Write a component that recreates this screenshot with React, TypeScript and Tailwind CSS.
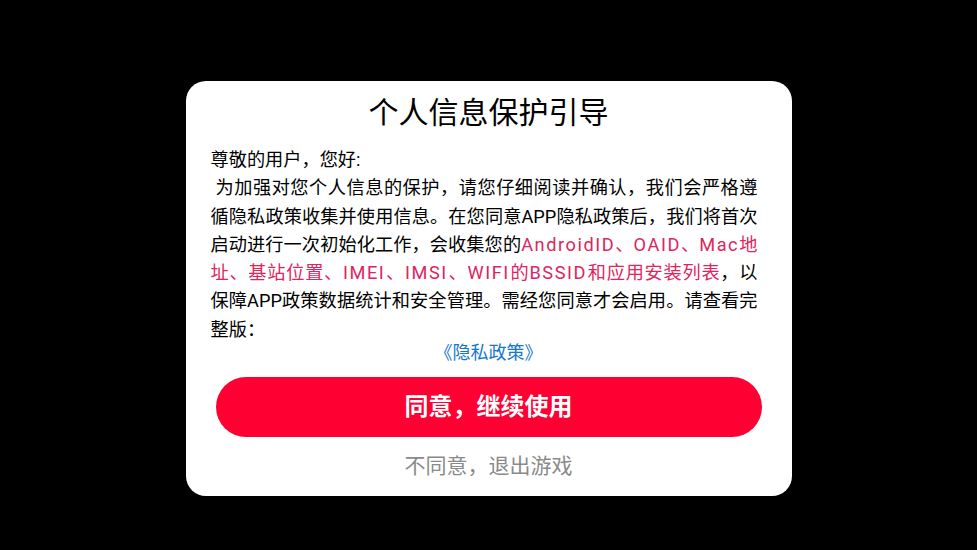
import { Fragment } from "react";

// Latin runs in the red list sit wider than plain Roboto in the reference
const red = "text-[#e0245e]";
const redWide = "text-[#e0245e] tracking-[1.55px]";

const permissions: [string, string][] = [
  ["AndroidID", "、"],
  ["OAID", "、"],
  ["Mac", "地址、基站位置、"],
  ["IMEI", "、"],
  ["IMSI", "、"],
  ["WIFI", "的"],
  ["BSSID", "和应用安装列表"],
];

export default function App() {
  return (
    <div className="h-[550px] w-[977px] overflow-hidden bg-black pt-[81px] font-['Roboto','Noto_Sans_CJK_SC',sans-serif]">
      <div className="mx-auto flex h-[415px] w-[606px] flex-col rounded-[20px] bg-white px-[25px] pt-[12px]">
        <h1 className="h-[40px] text-center text-[30px] leading-[40px] text-black">
          个人信息保护引导
        </h1>

        <div className="mt-[13px] w-[547px] text-justify text-[18.2px] leading-[28.3px] text-black">
          <p>尊敬的用户，您好:</p>
          <p>
            &nbsp;为加强对您个人信息的保护，请您仔细阅读并确认，我们会严格遵循隐私政策收集并使用信息。在您同意APP隐私政策后，我们将首次启动进行一次初始化工作，会收集您的
            {permissions.map(([latin, rest]) => (
              <Fragment key={latin}>
                <span className={redWide}>{latin}</span>
                <span className={red}>{rest}</span>
              </Fragment>
            ))}
            ，以保障APP政策数据统计和安全管理。需经您同意才会启用。请查看完整版：
          </p>
        </div>

        <div className="-mt-px text-center text-[18px] leading-[20px] text-[#1677c9]">
          《隐私政策》
        </div>

        <button className="mx-[5px] mt-[14px] h-[60px] shrink-0 rounded-full bg-[#ff0033] text-[24px] font-bold text-white">
          同意，继续使用
        </button>

        <div className="mt-[15px] text-center text-[21px] leading-[28px] text-[#8a8a8a]">
          不同意，退出游戏
        </div>
      </div>
    </div>
  );
}
